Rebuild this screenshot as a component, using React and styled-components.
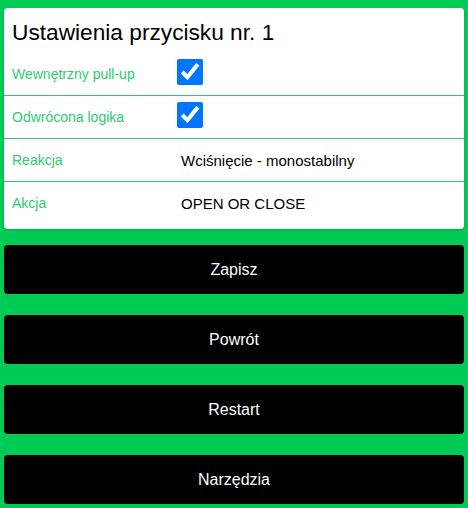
import React from 'react'
import styled, { createGlobalStyle } from 'styled-components'

const GlobalStyle = createGlobalStyle`
  html, body {
    margin: 0;
    padding: 0;
    background: #00cc55;
    font-family: "Liberation Sans", Arial, sans-serif;
  }
`

const Page = styled.div`
  display: flex;
  flex-direction: column;
  padding: 8px 4px;
  min-height: 100vh;
  box-sizing: border-box;
`

const Card = styled.div`
  background: #ffffff;
  border-radius: 4px;
  box-shadow: 0 1px 3px rgba(0, 0, 0, 0.15);
  padding: 11px 0 5px;
`

const Title = styled.h2`
  margin: 0 0 6px;
  padding: 0 8px;
  font-size: 22.7px;
  font-weight: normal;
  color: #000;
`

const Row = styled.div`
  display: grid;
  grid-template-columns: 169px 1fr;
  align-items: center;
  height: 43px;
  box-sizing: border-box;
  border-top: ${p => (p.$first ? 'none' : '1px solid #2fc574')};
`

const Label = styled.span`
  padding-left: 8px;
  font-size: 14px;
  color: #2ecc71;
`

const Value = styled.span`
  padding-left: 8px;
  font-size: 15px;
  color: #000;
`

const Check = styled.input`
  width: 26px;
  height: 26px;
  margin: 0 0 0 4px;
`

const Buttons = styled.div`
  display: flex;
  flex-direction: column;
  gap: 21px;
  margin-top: 16px;
`

const Button = styled.button`
  height: 49px;
  border: none;
  border-radius: 4px;
  background: #000;
  color: #fff;
  font-family: "Liberation Sans", Arial, sans-serif;
  font-size: 16px;
  cursor: pointer;
`

const rows = [
  { label: 'Wewnętrzny pull-up', check: true },
  { label: 'Odwrócona logika', check: true },
  { label: 'Reakcja', value: 'Wciśnięcie - monostabilny' },
  { label: 'Akcja', value: 'OPEN OR CLOSE' },
]

const App = () => {
  return (
    <>
      <GlobalStyle />
      <Page>
        <Card>
          <Title>Ustawienia przycisku nr. 1</Title>
          {rows.map((r, i) => (
            <Row key={r.label} $first={i === 0}>
              <Label>{r.label}</Label>
              {r.check ? (
                <div><Check type="checkbox" defaultChecked /></div>
              ) : (
                <Value>{r.value}</Value>
              )}
            </Row>
          ))}
        </Card>
        <Buttons>
          <Button>Zapisz</Button>
          <Button>Powrót</Button>
          <Button>Restart</Button>
          <Button>Narzędzia</Button>
        </Buttons>
      </Page>
    </>
  )
}

export default App
